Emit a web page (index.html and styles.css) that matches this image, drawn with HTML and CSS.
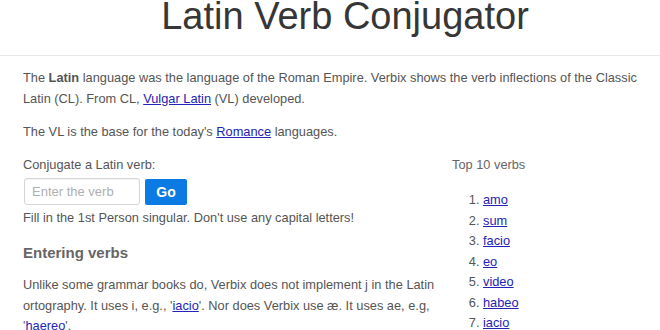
FILE: index.html
```html
<!DOCTYPE html>
<html lang="en">
<head>
    <meta charset="UTF-8">
    <meta name="viewport" content="width=device-width, initial-scale=1.0">
    <title>Latin Verb Conjugator</title>
    <link rel="stylesheet" href="styles.css">
</head>
<body>
    <!-- 页头 -->
    <header class="page-header">
        <h1 class="page-title">Latin Verb Conjugator</h1>
    </header>

    <div class="container">
        <p>The <b>Latin</b> language was the language of the Roman Empire. Verbix shows the verb inflections of the Classic Latin (CL). From CL, <a href="#">Vulgar Latin</a> (VL) developed.</p>
        <p>The VL is the base for the today's <a href="#">Romance</a> languages.</p>

        <div class="row">
            <div class="main-col">
                <div class="form-label">Conjugate a Latin verb:</div>
                <form class="verb-form" onsubmit="return false;">
                    <input class="verb-input" type="text" placeholder="Enter the verb">
                    <button class="go-button" type="submit">Go</button>
                </form>
                <div class="hint">Fill in the 1st Person singular. Don't use any capital letters!</div>

                <h2 class="section-title">Entering verbs</h2>
                <p class="section-text">Unlike some grammar books do, Verbix does not implement j in the Latin ortography. It uses i, e.g., '<a href="#">iacio</a>'. Nor does Verbix use æ. It uses ae, e.g, '<a href="#">haereo</a>'.</p>
            </div>

            <!-- 侧栏 -->
            <aside class="side-col">
                <div class="side-title">Top 10 verbs</div>
                <ol class="top-list">
                    <li><a href="#">amo</a></li>
                    <li><a href="#">sum</a></li>
                    <li><a href="#">facio</a></li>
                    <li><a href="#">eo</a></li>
                    <li><a href="#">video</a></li>
                    <li><a href="#">habeo</a></li>
                    <li><a href="#">iacio</a></li>
                    <li><a href="#">dico</a></li>
                    <li><a href="#">do</a></li>
                    <li><a href="#">venio</a></li>
                </ol>
            </aside>
        </div>
    </div>
</body>
</html>
```

FILE: styles.css
```css
* {
    margin: 0;
    padding: 0;
    box-sizing: border-box;
}

body {
    font-family: 'Liberation Sans', Arial, sans-serif;
    font-size: 12.8px;
    line-height: 20.5px;
    color: #555555;
    background-color: #ffffff;
}

a {
    color: #2323b8;
    text-decoration: underline;
}

.page-header {
    padding: 0 0 23px 30px;
    border-bottom: 1px solid #e8e8e8;
    text-align: center;
}

.page-title {
    font-size: 38px;
    font-weight: 300;
    line-height: 32px;
    color: #363636;
}

.container {
    padding: 12px 18px 0 23px;
}

.container > p {
    margin-bottom: 12.5px;
}

.row {
    display: grid;
    grid-template-columns: 425px 1fr;
    column-gap: 4px;
}

.verb-form {
    display: flex;
    gap: 5px;
    margin: 3px 0 3px 1px;
}

.verb-input {
    width: 116px;
    height: 27px;
    padding: 0 7px;
    border: 1px solid #d6d6d6;
    border-radius: 3px;
    font-family: inherit;
    font-size: 13px;
    color: #555555;
    box-shadow: inset 0 1px 1px rgba(0, 0, 0, 0.05);
}

.verb-input::placeholder {
    color: #b0b0b0;
}

.go-button {
    width: 42px;
    height: 26px;
    margin-top: 1px;
    background-color: #0b7be3;
    color: #ffffff;
    border: none;
    border-radius: 2px;
    font-family: inherit;
    font-size: 14px;
    font-weight: bold;
    cursor: pointer;
}

.section-title {
    margin-top: 14.5px;
    font-size: 15px;
    line-height: 20px;
    font-weight: bold;
    color: #666666;
}

.section-text {
    margin-top: 12px;
}

.side-title {
    color: #666666;
}

.top-list {
    margin-top: 15px;
    padding-left: 31px;
}
```
